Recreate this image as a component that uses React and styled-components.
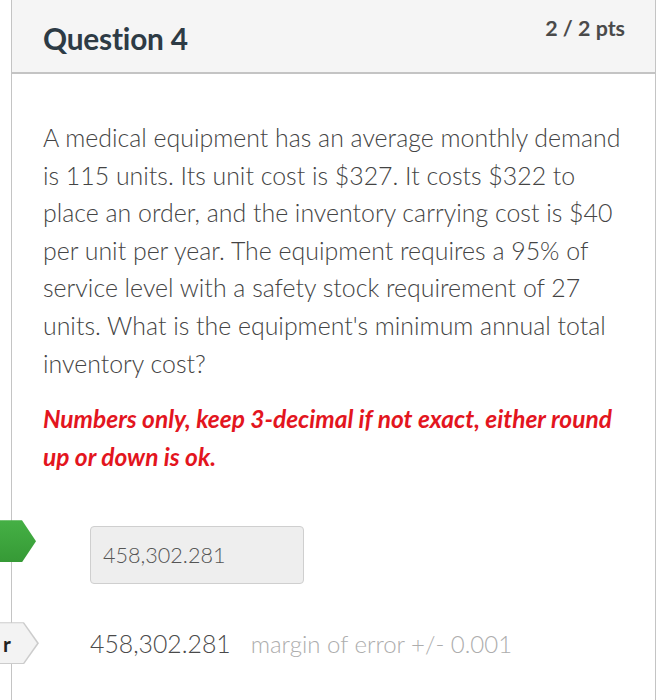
import styled, { createGlobalStyle } from "styled-components";

const Global = createGlobalStyle`
  body {
    margin: 0;
    background: #fff;
    font-family: Lato, "Open Sans", sans-serif;
  }
`;

const Page = styled.div`
  width: 660px;
  height: 700px;
  overflow: hidden;
`;

const Card = styled.div`
  margin-left: 11px;
  width: 645px;
  height: 700px;
  border-left: 1px solid #c4c4c4;
  border-right: 1px solid #c4c4c4;
  box-sizing: border-box;
`;

const Header = styled.div`
  height: 74px;
  background: #f5f5f5;
  border-bottom: 2px solid #c4c4c4;
  box-sizing: border-box;
  display: flex;
  justify-content: space-between;
  align-items: flex-start;
  padding: 0 30px 0 31px;
`;

const Title = styled.h2`
  margin: 21px 0 0;
  font-size: 29.8px;
  font-weight: 700;
  color: #2d3b45;
  letter-spacing: -0.2px;
`;

const Points = styled.div`
  margin-top: 15px;
  font-size: 21.4px;
  font-weight: 700;
  color: #4a4a4a;
`;

const Body = styled.div`
  padding: 45px 26px 0 31px;
`;

const Text = styled.p`
  margin: 0;
  font-size: 24.9px;
  line-height: 37.6px;
  font-weight: 300;
  color: #444;
`;

const Note = styled.p`
  margin: 18px 0 0;
  font-size: 24.5px;
  line-height: 37.6px;
  font-style: italic;
  font-weight: 700;
  color: #e3151e;
`;

const AnswerRow = styled.div`
  position: relative;
  display: flex;
  align-items: center;
  height: ${(p) => p.$h}px;
  margin-top: ${(p) => p.$mt}px;
  padding-left: 78px;
`;

const Tag = styled.div`
  position: absolute;
  left: -12px;
  top: ${(p) => p.$top}px;
  width: ${(p) => p.$w}px;
  height: ${(p) => p.$h}px;
  background: ${(p) =>
    p.$green ? "linear-gradient(#45b045, #369a36)" : "#f3f3f3"};
  clip-path: polygon(0 0, calc(100% - 14px) 0, 100% 50%, calc(100% - 14px) 100%, 0 100%);
  display: flex;
  align-items: center;
  padding-left: 3px;
  box-sizing: border-box;
  font-size: 21px;
  font-weight: 700;
  color: #222;
`;

const TagBorder = styled.div`
  position: absolute;
  left: -12px;
  top: ${(p) => p.$top - 1}px;
  width: ${(p) => p.$w + 2}px;
  height: ${(p) => p.$h + 2}px;
  background: #cccccc;
  clip-path: polygon(0 0, calc(100% - 15px) 0, 100% 50%, calc(100% - 15px) 100%, 0 100%);
`;

const InputBox = styled.div`
  width: 214px;
  height: 58px;
  box-sizing: border-box;
  background: #eeeeee;
  border: 1px solid #cfcfcf;
  border-radius: 4px;
  display: flex;
  align-items: center;
  padding-left: 12px;
  font-size: 21.6px;
  font-weight: 300;
  color: #555;
`;

const Value = styled.span`
  font-size: 24.8px;
  font-weight: 300;
  color: #4a4a4a;
`;

const Margin = styled.span`
  margin-left: 20px;
  font-size: 24px;
  font-weight: 300;
  color: #adadad;
`;

export default function App() {
  return (
    <Page>
      <Global />
      <Card>
        <Header>
          <Title>Question 4</Title>
          <Points>2 / 2 pts</Points>
        </Header>
        <Body>
          <Text>
            A medical equipment has an average monthly demand is 115 units. Its
            unit cost is $327. It costs $322 to place an order, and the
            inventory carrying cost is $40 per unit per year. The equipment
            requires a 95% of service level with a safety stock requirement of
            27 units. What is the equipment's minimum annual total inventory
            cost?
          </Text>
          <Note>
            Numbers only, keep 3-decimal if not exact, either round up or down
            is ok.
          </Note>
        </Body>
        <AnswerRow $h={58} $mt={51}>
          <Tag $green $top={-6} $w={36} $h={42} />
          <InputBox>458,302.281</InputBox>
        </AnswerRow>
        <AnswerRow $h={40} $mt={39}>
          <TagBorder $top={0} $w={37} $h={40} />
          <Tag $top={0} $w={37} $h={40}>r</Tag>
          <Value>458,302.281</Value>
          <Margin>margin of error +/- 0.001</Margin>
        </AnswerRow>
      </Card>
    </Page>
  );
}
